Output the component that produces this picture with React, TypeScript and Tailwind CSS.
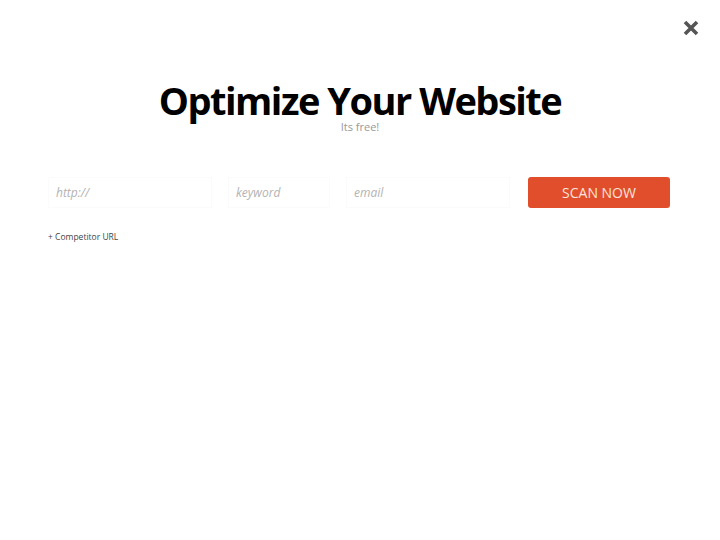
import { useState } from "react";

export default function App() {
  const [showCompetitor, setShowCompetitor] = useState(false);

  return (
    <div
      className="relative h-[540px] w-[720px] bg-white"
      style={{ fontFamily: '"Open Sans", "Liberation Sans", sans-serif' }}
    >
      <button className="absolute right-[21px] top-[20px] text-[#555]" aria-label="Close">
        <svg width="16" height="16" viewBox="0 0 16 16">
          <path d="M2 2 L14 14 M14 2 L2 14" stroke="currentColor" strokeWidth="3.6" strokeLinecap="butt" />
        </svg>
      </button>

      <div className="flex flex-col items-center pt-[80px]">
        <h1 className="text-[38px] font-bold leading-[40px] tracking-[-1.5px] text-black">
          Optimize Your Website
        </h1>
        <p className="text-[11px] leading-[14px] text-[#999]">Its free!</p>
      </div>

      <form className="mt-[43px] flex items-center px-[48px]" onSubmit={(e) => e.preventDefault()}>
        <input
          placeholder="http://"
          className="h-[31px] w-[164px] border border-[#fbfbfb] px-[7px] text-[12px] italic text-[#555] outline-none placeholder:text-[#b3b3b3]"
        />
        <input
          placeholder="keyword"
          className="ml-[16px] h-[31px] w-[102px] border border-[#fbfbfb] px-[7px] text-[12px] italic text-[#555] outline-none placeholder:text-[#b3b3b3]"
        />
        <input
          placeholder="email"
          className="ml-[16px] h-[31px] w-[164px] border border-[#fbfbfb] px-[7px] text-[12px] italic text-[#555] outline-none placeholder:text-[#b3b3b3]"
        />
        <button
          type="submit"
          className="ml-auto mr-[2px] h-[31px] w-[142px] rounded-[3px] bg-[#e14e2c] text-[14px] text-[#fbe3dc]"
        >
          SCAN NOW
        </button>
      </form>

      <div className="mt-[14px] px-[48px]">
        <button
          className="text-[8.5px] leading-[11px] text-[#444]"
          onClick={() => setShowCompetitor(!showCompetitor)}
        >
          + Competitor URL
        </button>
      </div>
    </div>
  );
}
